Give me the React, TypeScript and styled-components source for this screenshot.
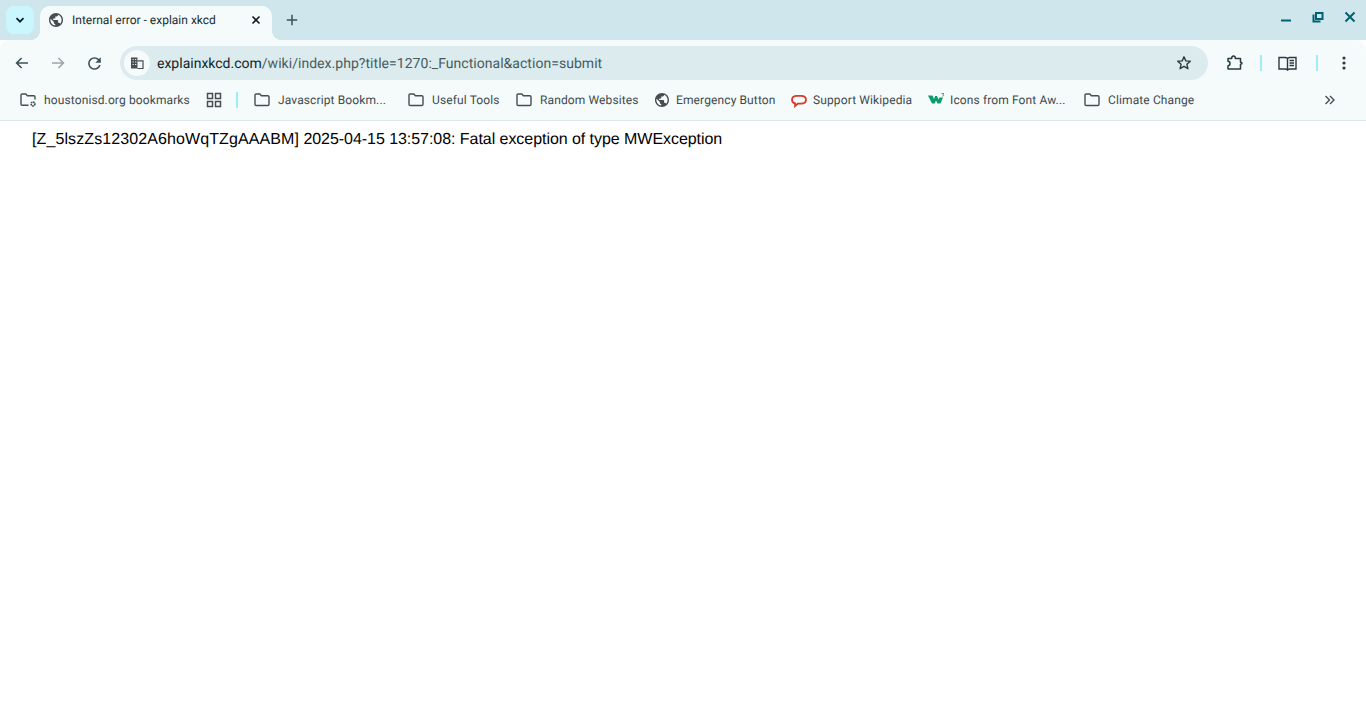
import styled, { createGlobalStyle } from 'styled-components'
import { ReactNode } from 'react'

const GlobalStyle = createGlobalStyle`
  html, body {
    margin: 0;
    padding: 0;
    height: 100%;
    background: #fff;
  }
  #root {
    height: 100%;
  }
`

const Ico = ({ children, size = 16, vb = '0 0 16 16' }: { children: ReactNode; size?: number; vb?: string }) => (
  <svg width={size} height={size} viewBox={vb} fill="none" style={{ display: 'block', flex: 'none' }}>
    {children}
  </svg>
)

const Globe = () => (
  <Ico size={14} vb="2 2 20 20">
    <path
      fill="#474d50"
      d="M12 2C6.480 2 2 6.480 2 12s4.480 10 10 10 10-4.480 10-10S17.520 2 12 2zm-1 17.930c-3.950-.490-7-3.850-7-7.930 0-.620.080-1.210.210-1.790L9 15v1c0 1.100.9 2 2 2v1.930zm6.900-2.540c-.260-.810-1-1.390-1.900-1.390h-1v-3c0-.550-.450-1-1-1H8v-2h2c.550 0 1-.450 1-1V7h2c1.100 0 2-.9 2-2v-.410c2.930 1.190 5 4.060 5 7.410 0 2.080-.8 3.970-2.100 5.390z"
    />
  </Ico>
)

const FolderIcon = () => (
  <Ico size={18} vb="0 0 18 18">
    <path
      d="M2 4.200c0-.7.5-1.200 1.200-1.200h3.600l1.600 1.800h6.400c.7 0 1.200.5 1.200 1.200v7.200c0 .7-.5 1.300-1.200 1.300H3.200c-.7 0-1.200-.6-1.200-1.300Z"
      stroke="#474d50"
      strokeWidth="1.400"
    />
  </Ico>
)

const bookmarks = [
  { label: 'Javascript Bookm...', icon: <FolderIcon />, width: 107, mr: 22, iconGap: 7 },
  { label: 'Useful Tools', icon: <FolderIcon />, width: 66, mr: 17, iconGap: 7 },
  { label: 'Random Websites', icon: <FolderIcon />, width: 98, mr: 17, iconGap: 7 },
  { label: 'Emergency Button', icon: <Globe />, width: 99, mr: 16, iconGap: 7 },
  {
    label: 'Support Wikipedia',
    icon: (
      <Ico>
        <path
          d="M6 3.900h4c2.900 0 5 1.500 5 3.900s-2.100 3.900-5 3.900H6.800L4 14l.1-2.500C2 11 1 9.600 1 7.800 1 5.400 3.100 3.900 6 3.900Z"
          stroke="#d93a2e"
          strokeWidth="1.800"
        />
      </Ico>
    ),
    width: 99,
    mr: 16,
    iconGap: 6,
  },
  {
    label: 'Icons from Font Aw...',
    icon: (
      <Ico size={17} vb="0 0 17 17">
        <path d="M0 4.500h4.500L6 8l1.200-3H9l1.500 3.500 1-2H15l-2.500 6h-3L8 9.500l-1.200 3H4Z" fill="#0a9d6c" />
        <path d="M13.500 2.500H16l-1.200 1.200c1 0 1.200 1.300-.4 1.600" stroke="#0a9d6c" strokeWidth=".8" />
      </Ico>
    ),
    width: 115,
    mr: 18,
    iconGap: 5,
  },
  { label: 'Climate Change', icon: <FolderIcon />, width: 87, mr: 0, iconGap: 7 },
]

export default function App() {
  return (
    <Page>
      <GlobalStyle />
      <TabStrip>
        <TabSearch>
          <Ico size={12} vb="0 0 12 12">
            <path d="M2.500 4.200 6 7.700l3.500-3.500" stroke="#0d2024" strokeWidth="1.800" />
          </Ico>
        </TabSearch>
        <Tab>
          <Globe />
          <TabTitle>Internal error - explain xkcd</TabTitle>
          <Ico size={10} vb="0 0 10 10">
            <path d="M1.500 1.500l7 7M8.500 1.500l-7 7" stroke="#131f22" strokeWidth="1.600" />
          </Ico>
        </Tab>
        <NewTab>
          <Ico size={12} vb="0 0 12 12">
            <path d="M6 .8v10.400M.8 6h10.400" stroke="#3d5257" strokeWidth="1.500" />
          </Ico>
        </NewTab>
        <WindowButtons>
          <Ico size={12} vb="0 0 12 12">
            <path d="M1 9.500h10" stroke="#00626e" strokeWidth="2" />
          </Ico>
          <Ico size={12} vb="0 0 12 12">
            <path d="M4 2h6.500v6H4Z" stroke="#00626e" strokeWidth="2" />
            <path d="M1.500 3.500v7h7" stroke="#00626e" strokeWidth="2" />
          </Ico>
          <Ico size={12} vb="0 0 12 12">
            <path d="M1.500 1.500l9 9M10.500 1.500l-9 9" stroke="#00626e" strokeWidth="2" />
          </Ico>
        </WindowButtons>
      </TabStrip>

      <Toolbar>
        <NavIcon>
          <Ico>
            <path d="M14 8H3M7.600 3 2.600 8l5 5" stroke="#3f5257" strokeWidth="1.600" />
          </Ico>
        </NavIcon>
        <NavIcon>
          <Ico>
            <path d="M2 8h11M8.400 3l5 5-5 5" stroke="#9aa5a8" strokeWidth="1.600" />
          </Ico>
        </NavIcon>
        <NavIcon>
          <Ico size={19} vb="0 0 24 24">
            <path
              fill="#3f5257"
              d="M17.650 6.350C16.200 4.900 14.210 4 12 4c-4.420 0-7.990 3.580-7.990 8s3.570 8 7.990 8c3.730 0 6.840-2.550 7.730-6h-2.080c-.820 2.330-3.040 4-5.650 4-3.310 0-6-2.690-6-6s2.690-6 6-6c1.660 0 3.140.690 4.220 1.780L13 11h7V4l-2.350 2.350z"
            />
          </Ico>
        </NavIcon>
        <Omnibox>
          <SiteChip>
            <Ico size={14} vb="0 0 14 14">
              <path d="M1 1.500h6.500v11H1Z" fill="#474d50" />
              <path d="M7.500 4.800H13v7.700H7.500" stroke="#474d50" strokeWidth="1.200" />
              <path d="M2.500 3.500h1.300M5 3.500h1.300M2.500 6h1.300M5 6h1.300M2.500 8.500h1.300M5 8.500h1.300M9 7.500h2M9 10h2" stroke="#dcebee" strokeWidth="1.100" />
            </Ico>
          </SiteChip>
          <UrlText>
            explainxkcd.com<UrlPath>/wiki/index.php?title=1270:_Functional&amp;action=submit</UrlPath>
          </UrlText>
          <Ico>
            <path
              d="M8 1.800l1.800 4.100 4.500.4-3.400 3 1 4.400L8 11.400l-3.900 2.300 1-4.400-3.400-3 4.500-.4Z"
              stroke="#283c40"
              strokeWidth="1.400"
              strokeLinejoin="round"
            />
          </Ico>
        </Omnibox>
        <ToolIcons>
          <Ico size={18} vb="0 0 18 18">
            <path
              d="M2 4.500h3.700C5.700 3 6.400 2 7.500 2S9.300 3 9.300 4.500h5.200v3.800c1.200 0 1.500.4 1.500.9s-.3 1-1.500 1V15H2v-3.200c1.300 0 2-.8 2-2.200S3.300 7.300 2 7.300Z"
              stroke="#283c40"
              strokeWidth="1.500"
              strokeLinejoin="round"
            />
          </Ico>
          <Divider />
          <Ico size={19} vb="0 0 19 19">
            <path d="M1 3.500h6.500c1 0 1.700.5 2 1.200.3-.7 1-1.200 2-1.200H18v11.500h-6c-1.200 0-2 .4-2.500 1-.5-.6-1.300-1-2.500-1H1Z" stroke="#283c40" strokeWidth="1.400" />
            <path d="M9.500 4.700V16M11.500 6.500h4.500M11.500 9h4.500M11.500 11.500h4.500" stroke="#283c40" strokeWidth="1.400" />
          </Ico>
          <Divider $wide />
          <Ico>
            <circle cx="8" cy="3" r="1.600" fill="#283c40" />
            <circle cx="8" cy="8" r="1.600" fill="#283c40" />
            <circle cx="8" cy="13" r="1.600" fill="#283c40" />
          </Ico>
        </ToolIcons>
      </Toolbar>

      <BookmarksBar>
        <Bookmark $gap={7} $mr={16}>
          <Ico size={18} vb="0 0 18 18">
            <path d="M9.500 14.300H3.200C2.500 14.300 2 13.700 2 13V4.200C2 3.500 2.500 3 3.200 3h3.600l1.600 1.800h6.400c.7 0 1.200.5 1.200 1.200v2.500" stroke="#474d50" strokeWidth="1.400" />
            <circle cx="14" cy="13" r="1.900" stroke="#474d50" strokeWidth="1.600" strokeDasharray="1.500 .5" />
          </Ico>
          <BookmarkLabel style={{ width: 146 }}>houstonisd.org bookmarks</BookmarkLabel>
        </Bookmark>
        <Ico size={16} vb="0 0 16 16">
          <path d="M1.500 1.500h5v5h-5ZM9.500 1.500h5v5h-5ZM1.500 9.500h5v5h-5ZM9.500 9.500h5v5h-5Z" stroke="#474d50" strokeWidth="1.500" />
        </Ico>
        <BarDivider />
        {bookmarks.map((b) => (
          <Bookmark key={b.label} $gap={b.iconGap} $mr={b.mr}>
            {b.icon}
            <BookmarkLabel style={{ width: b.width }}>{b.label}</BookmarkLabel>
          </Bookmark>
        ))}
        <MoreBookmarks>
          <Ico size={12} vb="0 0 12 12">
            <path d="M1.500 2 5.500 6l-4 4M6 2l4 4-4 4" stroke="#474d50" strokeWidth="1.400" />
          </Ico>
        </MoreBookmarks>
      </BookmarksBar>

      <Content>
        <RequestId>[Z_5lszZs12302A6hoWqTZgAAABM]</RequestId> 2025-04-15 13:57:08: Fatal exception of type MWException
      </Content>
    </Page>
  )
}

const Page = styled.div`
  min-height: 100%;
  background: #fff;
  font-family: Roboto, 'Liberation Sans', sans-serif;
  text-rendering: geometricPrecision;
`

const TabStrip = styled.div`
  height: 40px;
  background: #cfe6ec;
  display: flex;
  align-items: flex-end;
  padding-left: 6px;
`

const TabSearch = styled.div`
  width: 28px;
  height: 28px;
  margin-bottom: 6px;
  border-radius: 8px;
  background: #caf6fd;
  display: flex;
  align-items: center;
  justify-content: center;
`

const Tab = styled.div`
  position: relative;
  width: 232px;
  height: 34px;
  margin-left: 6px;
  box-sizing: border-box;
  padding: 0 11px 6px 9px;
  background: #f5fbfb;
  border-radius: 10px 10px 0 0;
  display: flex;
  align-items: center;
  gap: 9px;

  &::before,
  &::after {
    content: '';
    position: absolute;
    bottom: 0;
    width: 10px;
    height: 10px;
  }
  &::before {
    left: -10px;
    background: radial-gradient(circle at 0 0, transparent 10px, #f5fbfb 10.5px);
  }
  &::after {
    right: -10px;
    background: radial-gradient(circle at 100% 0, transparent 10px, #f5fbfb 10.5px);
  }
`

const TabTitle = styled.div`
  flex: 1;
  font-size: 12px;
  color: #1a2b2f;
  white-space: nowrap;
`

const NewTab = styled.div`
  width: 28px;
  height: 28px;
  margin: 0 0 6px 6px;
  display: flex;
  align-items: center;
  justify-content: center;
`

const WindowButtons = styled.div`
  margin-left: auto;
  align-self: flex-start;
  padding: 11px 10px 0 0;
  display: flex;
  gap: 20px;
`

const Toolbar = styled.div`
  height: 44px;
  box-sizing: border-box;
  background: #f5fbfb;
  border-radius: 10px 10px 0 0;
  display: flex;
  align-items: center;
  padding: 2px 14px 0 4px;
`

const NavIcon = styled.div`
  width: 36px;
  height: 34px;
  display: flex;
  align-items: center;
  justify-content: center;
`

const Omnibox = styled.div`
  width: 1088px;
  height: 34px;
  margin-left: 8px;
  box-sizing: border-box;
  padding: 0 16px 0 4px;
  background: #dcebee;
  border-radius: 17px;
  display: flex;
  align-items: center;
`

const SiteChip = styled.div`
  width: 26px;
  height: 26px;
  border-radius: 50%;
  background: #f5fbfb;
  display: flex;
  align-items: center;
  justify-content: center;
`

const UrlText = styled.div`
  flex: 1;
  margin: 1px 0 0 7px;
  font-size: 14px;
  color: #10262b;
  white-space: nowrap;
`

const UrlPath = styled.span`
  color: #475c61;
  letter-spacing: 0.035px;
`

const ToolIcons = styled.div`
  margin-left: auto;
  display: flex;
  align-items: center;
  gap: 16px;
`

const Divider = styled.div<{ $wide?: boolean }>`
  width: 2px;
  height: 16px;
  margin: ${(p) => (p.$wide ? '0 2px 0 3px' : '0')};
  background: #9eedf9;
`

const BookmarksBar = styled.div`
  box-sizing: border-box;
  height: 37px;
  padding: 0 0 5px 19px;
  background: #f5fbfb;
  border-bottom: 1px solid #dbe7e9;
  display: flex;
  align-items: center;
`

const Bookmark = styled.div<{ $gap: number; $mr: number }>`
  display: flex;
  align-items: center;
  gap: ${(p) => p.$gap}px;
  margin-right: ${(p) => p.$mr}px;
`

const BookmarkLabel = styled.div`
  font-size: 12px;
  letter-spacing: 0.12px;
  color: #3f4a4d;
  white-space: nowrap;
`

const BarDivider = styled.div`
  width: 2px;
  height: 16px;
  margin: 0 15px 0 14px;
  background: #9eedf9;
`

const MoreBookmarks = styled.div`
  margin-left: auto;
  margin-right: 30px;
`

const Content = styled.div`
  padding: 9px 32px;
  font-family: 'Liberation Sans', Arial, sans-serif;
  font-size: 16px;
  letter-spacing: -0.05px;
  line-height: 20px;
  color: #000;
`

const RequestId = styled.span`
  letter-spacing: 0.1px;
`
